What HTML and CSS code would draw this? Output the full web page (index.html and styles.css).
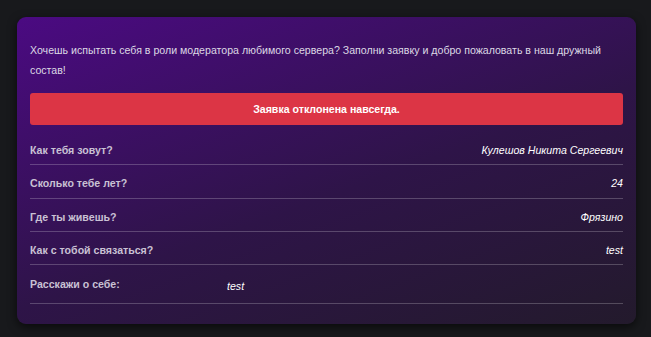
FILE: index.html
```html
<!DOCTYPE html>
<html lang="ru">
<head>
<meta charset="utf-8">
<link rel="stylesheet" href="styles.css">
</head>
<body>
<div class="card">
  <p class="intro">Хочешь испытать себя в роли модератора любимого сервера? Заполни заявку и добро пожаловать в наш дружный состав!</p>
  <div class="alert">Заявка отклонена навсегда.</div>
  <div class="row"><span class="label">Как тебя зовут?</span><span class="value">Кулешов Никита Сергеевич</span></div>
  <div class="row"><span class="label">Сколько тебе лет?</span><span class="value">24</span></div>
  <div class="row"><span class="label">Где ты живешь?</span><span class="value">Фрязино</span></div>
  <div class="row"><span class="label">Как с тобой связаться?</span><span class="value">test</span></div>
  <div class="row row-about"><span class="label">Расскажи о себе:</span><span class="about">test</span></div>
</div>
</body>
</html>
```
FILE: styles.css
```css
html, body {
  margin: 0;
  padding: 0;
  background: #18191c;
}
body {
  padding: 17px;
  font-family: "Liberation Sans", Arial, sans-serif;
  font-size: 10.6px;
}
.card {
  width: 593px;
  padding: 23px 13px 20px;
  border-radius: 9px;
  background: linear-gradient(160deg, #4b0a82 0%, #2e1448 55%, #231a2c 100%);
  box-shadow: 0 3px 10px rgba(0, 0, 0, 0.6);
}
.intro {
  margin: 0 0 13px;
  line-height: 20px;
  color: #dcd8e4;
}
.alert {
  height: 32px;
  border-radius: 3px;
  background: #dc3545;
  color: #fff;
  font-weight: bold;
  display: flex;
  align-items: center;
  justify-content: center;
  margin-bottom: 7px;
}
.row {
  display: flex;
  justify-content: space-between;
  padding: 10px 0 6px;
  line-height: 16.33px;
  border-bottom: 1px solid rgba(255, 255, 255, 0.22);
}
.label {
  font-weight: bold;
  color: #c9c1d4;
}
.value {
  font-style: italic;
  color: #fff;
}
.row-about {
  justify-content: flex-start;
  padding: 11px 0 8px;
}
.row-about .label {
  width: 197px;
}
.about {
  font-style: italic;
  color: #fff;
  padding-top: 2px;
}
```
